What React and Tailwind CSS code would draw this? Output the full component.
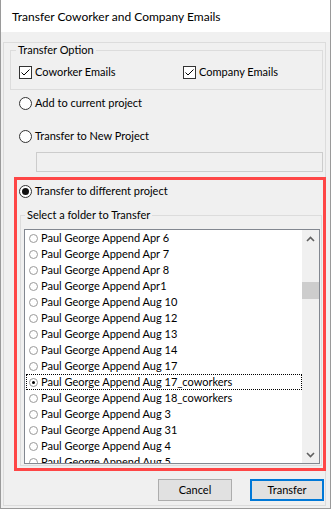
import React from 'react';

const folders = [
  'Paul George Append Apr 6',
  'Paul George Append Apr 7',
  'Paul George Append Apr 8',
  'Paul George Append Apr1',
  'Paul George Append Aug 10',
  'Paul George Append Aug 12',
  'Paul George Append Aug 13',
  'Paul George Append Aug 14',
  'Paul George Append Aug 17',
  'Paul George Append Aug 17_coworkers',
  'Paul George Append Aug 18_coworkers',
  'Paul George Append Aug 3',
  'Paul George Append Aug 31',
  'Paul George Append Aug 4',
  'Paul George Append Aug 5',
];

const selectedFolder = 'Paul George Append Aug 17_coworkers';

function Radio({ checked }) {
  return (
    <span className="w-[13px] h-[13px] rounded-full border border-[#333333] bg-white flex items-center justify-center shrink-0">
      {checked && <span className="w-[7px] h-[7px] rounded-full bg-[#111111]" />}
    </span>
  );
}

function SmallRadio({ checked }) {
  return (
    <span className="w-[9px] h-[9px] rounded-full border border-[#9a9a9a] bg-white flex items-center justify-center shrink-0">
      {checked && <span className="w-[3px] h-[3px] rounded-full bg-black" />}
    </span>
  );
}

function Checkbox() {
  return (
    <span className="w-[13px] h-[13px] border border-[#333333] bg-white flex items-center justify-center shrink-0">
      <svg width="11" height="11" viewBox="0 0 11 11">
        <polyline points="1.5,5.5 4,8 9.5,2.5" fill="none" stroke="#000" strokeWidth="1" />
      </svg>
    </span>
  );
}

function Chevron({ up }) {
  return (
    <svg width="9" height="6" viewBox="0 0 9 6">
      <polyline
        points={up ? '1,5 4.5,1.5 8,5' : '1,1 4.5,4.5 8,1'}
        fill="none"
        stroke="#606060"
        strokeWidth="1.6"
      />
    </svg>
  );
}

export default function App() {
  return (
    <div className="w-[331px] h-[509px] overflow-hidden flex flex-col bg-[#f0f0f0] border-x border-b border-[#9a9a9a] text-[11px] text-black font-['Lato',sans-serif]">
      {/* Title bar */}
      <div className="h-[32px] shrink-0 bg-white flex items-center pl-[11px] pt-[1px]">
        <span className="text-[12px] leading-[14px]">Transfer Coworker and Company Emails</span>
      </div>

      {/* Dialog body */}
      <div className="mt-[10px] ml-[2px] w-[323px] h-[464px] border border-[#dcdcdc] flex flex-col">
        <fieldset className="ml-[6px] mr-[2px] border border-[#dcdcdc] pt-[8px] pb-[10px]">
          <legend className="ml-[5px] px-[2px] leading-[14px]">Transfer Option</legend>
          <div className="flex items-center h-[14px] pl-[8px]">
            <label className="w-[164px] flex items-center gap-[3px]">
              <Checkbox />
              <span className="leading-[14px]">Coworker Emails</span>
            </label>
            <label className="flex items-center gap-[3px]">
              <Checkbox />
              <span className="leading-[14px]">Company Emails</span>
            </label>
          </div>
        </fieldset>

        <div className="mt-[5px] h-[16px] pl-[15px] flex items-center gap-[3px]">
          <Radio />
          <span>Add to current project</span>
        </div>

        <div className="mt-[17px] h-[16px] pl-[15px] flex items-center gap-[3px]">
          <Radio />
          <span>Transfer to New Project</span>
        </div>

        <div className="mt-[8px] ml-[32px] w-[287px] h-[20px] border border-[#cccccc] bg-[#f0f0f0]" />

        {/* Highlighted section */}
        <div className="mt-[5px] ml-[10px] w-[312px] border-[3px] border-[#fe4646] flex flex-col pt-[3px] pb-[2px]">
          <div className="h-[16px] pl-[2px] flex items-center gap-[3px]">
            <Radio checked />
            <span>Transfer to different project</span>
          </div>

          <fieldset className="mt-[9px] ml-[3px] mr-[1px] border border-[#dcdcdc] pb-[1px]">
            <legend className="ml-[4px] px-[2px] leading-[14px]">Select a folder to Transfer</legend>
            <div className="mt-[7px] ml-[3px] w-[296px] h-[235px] border border-[#828790] bg-white flex">
              <div className="flex-1 overflow-hidden">
                {folders.map((name) => {
                  const sel = name === selectedFolder;
                  return (
                    <div
                      key={name}
                      className={`ml-[1px] h-[16px] flex items-center gap-[3px] pl-[2px] border border-dotted ${sel ? 'border-black' : 'border-transparent'}`}
                    >
                      <SmallRadio checked={sel} />
                      <span className="whitespace-nowrap">{name}</span>
                    </div>
                  );
                })}
              </div>
              <div className="w-[17px] shrink-0 bg-[#f0f0f0] flex flex-col">
                <div className="h-[17px] flex items-center justify-center">
                  <Chevron up />
                </div>
                <div className="mt-[35px] h-[17px] bg-[#cdcdcd]" />
                <div className="flex-1" />
                <div className="h-[17px] flex items-center justify-center">
                  <Chevron />
                </div>
              </div>
            </div>
          </fieldset>
        </div>

        {/* Buttons */}
        <div className="mt-[8px] mr-[1px] flex justify-end gap-[18px]">
          <button className="w-[74px] h-[22px] border border-[#adadad] bg-[#e1e1e1] text-[11px] font-normal leading-[14px]">Cancel</button>
          <button className="w-[74px] h-[22px] border-2 border-[#0078d7] bg-[#e1e1e1] text-[11px] font-normal leading-[14px]">Transfer</button>
        </div>
      </div>
    </div>
  );
}
